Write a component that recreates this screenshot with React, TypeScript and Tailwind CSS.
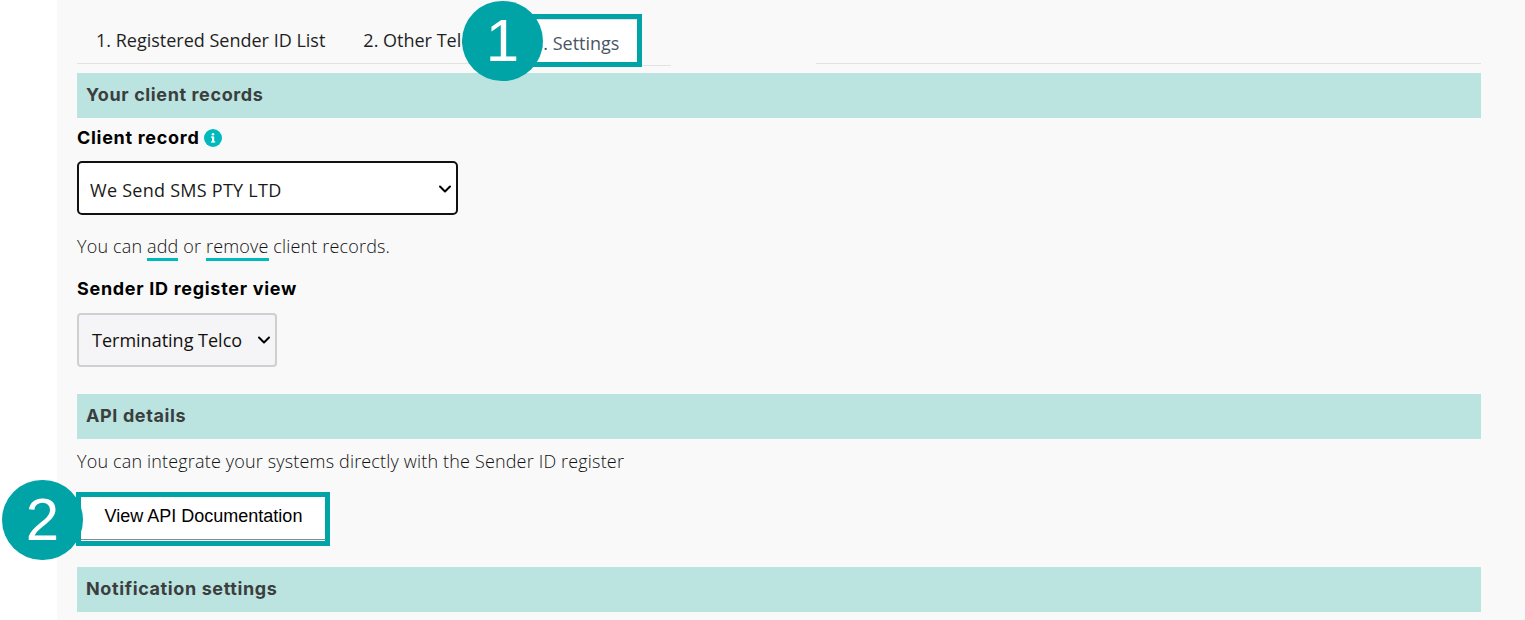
import { ChevronDown } from 'lucide-react';

const body = "font-['Open_Sans',sans-serif]";
const heading = "font-['Inter',sans-serif]";

function SectionBar({ title }: { title: string }) {
  return (
    <div className={`flex h-[45px] items-center bg-[#bbe3e0] pb-[3px] pl-[9px] text-[18px] font-bold tracking-[0.62px] text-[#3a3f3e] ${heading}`}>
      {title}
    </div>
  );
}

function FieldLabel({ children }: { children: React.ReactNode }) {
  return <div className={`text-[18px] font-bold leading-[24px] tracking-[0.7px] text-black ${heading}`}>{children}</div>;
}

function Badge({ n }: { n: number }) {
  return (
    <div className="absolute flex h-[80px] w-[81px] items-center justify-center rounded-full bg-[#00a3a6] font-['Liberation_Sans',sans-serif] text-[60px] leading-none text-white">
      {n}
    </div>
  );
}

export default function App() {
  return (
    <div className={`h-[620px] w-[1525px] overflow-hidden bg-white ${body}`}>
      <div className="ml-[57px] h-full bg-[#f9f9f9] pl-[20px] pr-[44px]">
        {/* tabs */}
        <div className="relative flex h-[66px] items-start">
          <div className="flex h-[64px] w-[443px] items-center border-b border-[#e2e2e2] pl-[19px] pt-[17px] text-[18px] text-[#1f1f1f]">
            <span className="whitespace-nowrap">1. Registered Sender ID List</span>
            <span className="ml-[38px] whitespace-nowrap">2. Other Telco</span>
          </div>
          <div className="ml-[122px] mt-[65px] h-px w-[29px] bg-[#e2e2e2]" />
          <div className="ml-[145px] mt-[63px] h-px flex-1 bg-[#e2e2e2]" />
          <div className="absolute left-[445px] top-[14px] h-[53px] w-[120px] border-[5px] border-[#00a3a6] bg-white">
            <div className="flex h-full items-center border-t border-[#e2e2e2] pl-[6px] pt-[4px] text-[18px] text-[#4b5563]">
              3. Settings
            </div>
          </div>
          <div className="absolute left-[385px] top-[1px]">
            <Badge n={1} />
          </div>
        </div>

        <div className="mt-[7px]">
          <SectionBar title="Your client records" />
        </div>

        <div className="mt-[8px] flex items-center gap-[5px]">
          <FieldLabel>Client record</FieldLabel>
          <svg width="18" height="18" viewBox="0 0 18 18" aria-hidden="true">
            <circle cx="9" cy="9" r="9" fill="#00b9bd" />
            <rect x="8" y="7.5" width="2.2" height="5.5" fill="#fff" />
            <rect x="7" y="12.4" width="4.2" height="1.2" fill="#fff" />
            <rect x="7" y="7.5" width="2" height="1.2" fill="#fff" />
            <circle cx="9" cy="5.2" r="1.3" fill="#fff" />
          </svg>
        </div>

        <div className="mt-[11px] flex h-[54px] w-[381px] items-center justify-between rounded-[5px] border-2 border-[#111] bg-white pl-[11px] pr-[1px] pt-[4px] text-[18px] tracking-[0.26px] text-[#1a1a1a]">
          We Send SMS PTY LTD
          <ChevronDown size={20} strokeWidth={2.4} className="mb-[3px] text-black" />
        </div>

        <p className="mt-[18px] text-[18px] font-light leading-[26px] tracking-[0.16px] text-[#111]">
          You can <a className="border-b-[3px] border-[#00b9bd] font-[350]">add</a> or{' '}
          <a className="border-b-[3px] border-[#00b9bd] font-[350]">remove</a> client records.
        </p>

        <div className="mt-[18px]">
          <FieldLabel>Sender ID register view</FieldLabel>
        </div>

        <div className="mt-[12px] flex h-[54px] w-[200px] items-center justify-between rounded-[4px] border-2 border-[#cfcfcf] bg-[#f5f4f6] pl-[13px] pr-[1px] text-[18px] text-[#111]">
          Terminating Telco
          <ChevronDown size={20} strokeWidth={2.4} className="text-black" />
        </div>

        <div className="mt-[27px]">
          <SectionBar title="API details" />
        </div>

        <p className="mt-[9px] text-[18px] font-light leading-[26px] tracking-[0.167px] text-[#111]">
          You can integrate your systems directly with the Sender ID register
        </p>

        <div className="relative mt-[18px] h-[54px]">
          <div className="ml-[-1px] flex h-[54px] w-[254px] flex-col border-[5px] border-[#00a3a6] bg-white">
            <div className="flex flex-1 items-center justify-center pb-[4px] pl-[1px] font-['Liberation_Sans',sans-serif] text-[18px] text-black">
              View API Documentation
            </div>
            <div className="mb-[1px] h-px bg-[#888]" />
          </div>
          <div className="absolute left-[-75px] top-[-12px]">
            <Badge n={2} />
          </div>
        </div>

        <div className="mt-[21px]">
          <SectionBar title="Notification settings" />
        </div>
      </div>
    </div>
  );
}
